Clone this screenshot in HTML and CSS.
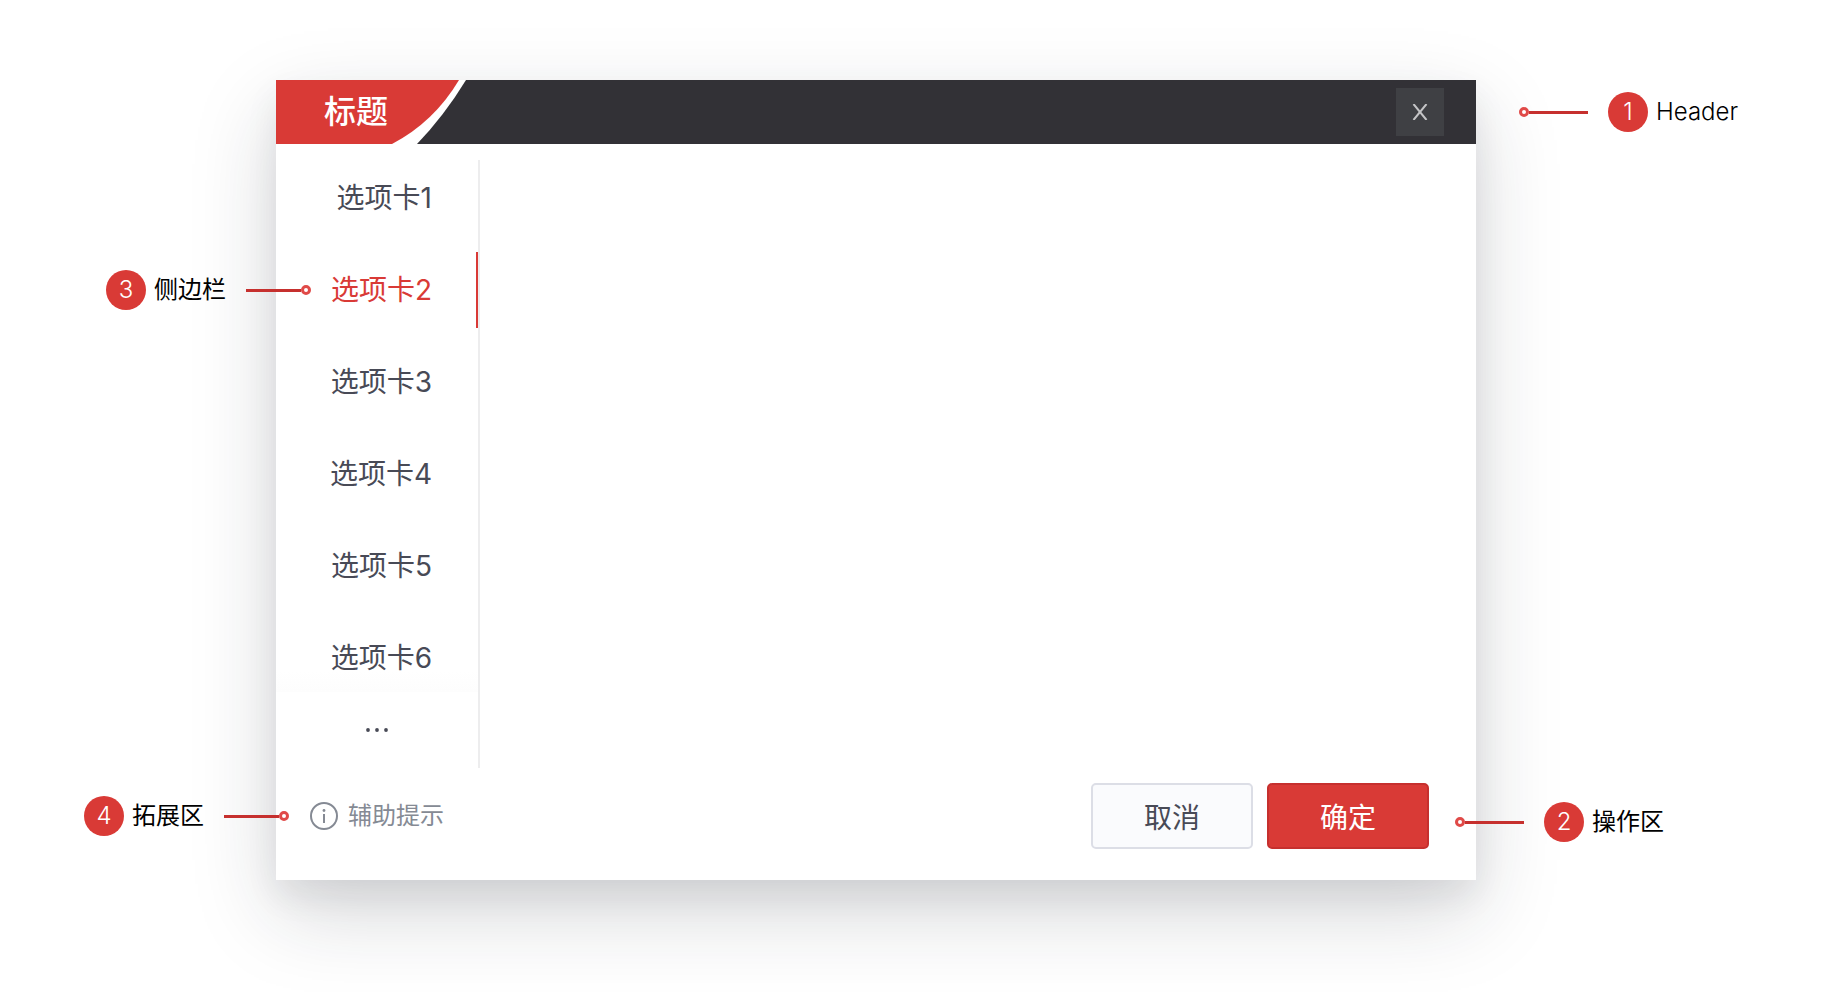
FILE: index.html
```
<!DOCTYPE html>
<html lang="zh-CN">
<head>
  <meta charset="UTF-8" />
  <meta name="viewport" content="width=device-width, initial-scale=1.0"/>
  <title>标题</title>
  <link rel="stylesheet" href="styles.css">
</head>
<body>
  <main class="stage">
    <section class="dialog" role="dialog" aria-labelledby="dialogTitle">
      <header class="dialog-header">
        <svg class="title-shape" width="192" height="64" viewBox="0 0 192 64" aria-hidden="true">
          <path fill="#fff" d="M0 0H190Q168 36 141 64H0Z"/>
          <path fill="#d93a36" d="M0 0H183Q158 42 116 64H0Z"/>
        </svg>
        <h1 id="dialogTitle">标题</h1>
        <button type="button" class="btn-close" aria-label="关闭">
          <svg width="16" height="16" viewBox="0 0 16 16" aria-hidden="true">
            <path d="M1.5 0L14.5 16M14.5 0L1.5 16"/>
          </svg>
        </button>
        <div class="note note-right note-header">
          <span class="pointer"></span>
          <span class="badge">1</span>
          <span class="note-text">Header</span>
        </div>
      </header>

      <div class="dialog-body">
        <nav class="sidebar">
          <a href="#tab1" class="tab">选项卡1</a>
          <a href="#tab2" class="tab active">选项卡2</a>
          <a href="#tab3" class="tab">选项卡3</a>
          <a href="#tab4" class="tab">选项卡4</a>
          <a href="#tab5" class="tab">选项卡5</a>
          <a href="#tab6" class="tab">选项卡6</a>
          <button type="button" class="tab-more" aria-label="更多">
            <svg width="22" height="4" viewBox="0 0 22 4" aria-hidden="true">
              <circle cx="2" cy="2" r="1.9"/>
              <circle cx="11" cy="2" r="1.9"/>
              <circle cx="20" cy="2" r="1.9"/>
            </svg>
          </button>
          <div class="note note-left note-sidebar">
            <span class="badge">3</span>
            <span class="note-text">侧边栏</span>
            <span class="pointer"></span>
          </div>
        </nav>
        <div class="content"></div>
      </div>

      <footer class="dialog-footer">
        <p class="hint">
          <svg width="28" height="28" viewBox="0 0 28 28" aria-hidden="true">
            <circle cx="14" cy="14" r="13" fill="none" stroke="#858a94" stroke-width="2"/>
            <circle cx="14" cy="8.5" r="1.4" fill="#858a94"/>
            <path d="M14 12V21" stroke="#858a94" stroke-width="2"/>
          </svg>
          辅助提示
        </p>
        <button type="button" class="btn">取消</button>
        <button type="button" class="btn btn-primary">确定</button>
        <div class="note note-right note-actions">
          <span class="pointer"></span>
          <span class="badge">2</span>
          <span class="note-text">操作区</span>
        </div>
        <div class="note note-left note-extra">
          <span class="badge">4</span>
          <span class="note-text">拓展区</span>
          <span class="pointer"></span>
        </div>
      </footer>
    </section>
  </main>
</body>
</html>
```

FILE: styles.css
```
:root {
  --primary: #d93a36;
  --primary-dark: #c6302e;
  --header-bg: #323136;
  --text: #484a56;
  --muted: #858a94;
  --line: #ededee;
}
*, *::before, *::after {
  box-sizing: border-box;
}
body {
  margin: 0;
  background: #fff;
  color: var(--text);
  font-family: Inter, "Noto Sans CJK SC", sans-serif;
  font-weight: 400;
  overflow-x: hidden;
}
button {
  font: inherit;
  cursor: pointer;
}
.stage {
  padding: 80px 362px 112px 276px;
}
.dialog {
  background: #fff;
  box-shadow: 0 32px 80px rgba(30,34,44,0.18), 0 16px 32px rgba(30,34,44,0.07);
}

/* header */
.dialog-header {
  position: relative;
  display: flex;
  align-items: center;
  height: 64px;
  padding: 0 32px 0 48px;
  background: var(--header-bg);
}
.title-shape {
  position: absolute;
  top: 0;
  left: 0;
}
h1 {
  position: relative;
  margin: 0;
  color: #fff;
  font-size: 32px;
  line-height: 48px;
  font-weight: 500;
}
.btn-close {
  display: flex;
  align-items: center;
  justify-content: center;
  width: 48px;
  height: 48px;
  margin-left: auto;
  padding: 0;
  border: none;
  background: #3f4044;
}
.btn-close path {
  fill: none;
  stroke: #c4c4c6;
  stroke-width: 2;
}

/* sidebar and content */
.dialog-body {
  display: flex;
  padding-top: 16px;
}
.sidebar {
  position: relative;
  display: flex;
  flex-direction: column;
  width: 204px;
  border-right: 2px solid var(--line);
}
.tab {
  height: 76px;
  margin-bottom: 16px;
  padding-right: 44px;
  border-right: 2px solid transparent;
  color: var(--text);
  font-size: 28px;
  line-height: 76px;
  text-align: right;
  text-decoration: none;
}
.tab.active {
  border-right-color: var(--primary);
  color: var(--primary);
}
.tab:nth-child(6) {
  height: 72px;
  margin-bottom: 0;
  background: linear-gradient(#fff 70%, #fdfdfd);
}
.tab-more {
  display: flex;
  align-items: center;
  justify-content: center;
  height: 76px;
  padding: 0;
  border: none;
  background: none;
}
.tab-more circle {
  fill: var(--text);
}
.content {
  flex: 1;
}

/* footer */
.dialog-footer {
  position: relative;
  display: flex;
  align-items: center;
  gap: 14px;
  height: 112px;
  padding: 0 47px 16px 34px;
}
.hint {
  display: flex;
  align-items: center;
  gap: 10px;
  margin: 0 auto 0 0;
  color: var(--muted);
  font-size: 24px;
  line-height: 36px;
}
.btn {
  width: 162px;
  height: 66px;
  padding: 0;
  border: 2px solid #dcdee6;
  border-radius: 5px;
  background: #fafbfd;
  color: var(--text);
  font-size: 28px;
}
.btn-primary {
  border-color: var(--primary-dark);
  background: var(--primary);
  color: #fff;
}

/* numbered notes around the dialog */
.note {
  position: absolute;
  display: flex;
  align-items: center;
  height: 40px;
  color: #000;
  font-size: 24px;
  line-height: 40px;
  white-space: nowrap;
}
.note-right {
  left: calc(100% - 21px);
}
.note-left {
  right: calc(100% - 13px);
}
.note-header {
  top: 12px;
  left: calc(100% + 43px);
  font-weight: 300;
}
.note-sidebar {
  top: 110px;
  right: calc(100% - 35px);
}
.note-actions {
  top: 34px;
}
.note-extra {
  top: 28px;
}
.badge {
  width: 40px;
  height: 40px;
  margin-right: 8px;
  border-radius: 50%;
  background: var(--primary);
  color: #fff;
  font-weight: 300;
  text-align: center;
}
.pointer {
  display: flex;
  align-items: center;
  width: 69px;
}
.pointer::before,
.pointer::after {
  content: "";
}
.note-right .pointer {
  margin-right: 20px;
}
.note-left .pointer {
  flex-direction: row-reverse;
  width: 65px;
  margin-left: 20px;
}
.pointer::before {
  width: 10px;
  height: 10px;
  border: 3px solid #e04a48;
  border-radius: 50%;
  background: #fff;
}
.pointer::after {
  flex: 1;
  height: 3px;
  background: var(--primary-dark);
}
```
